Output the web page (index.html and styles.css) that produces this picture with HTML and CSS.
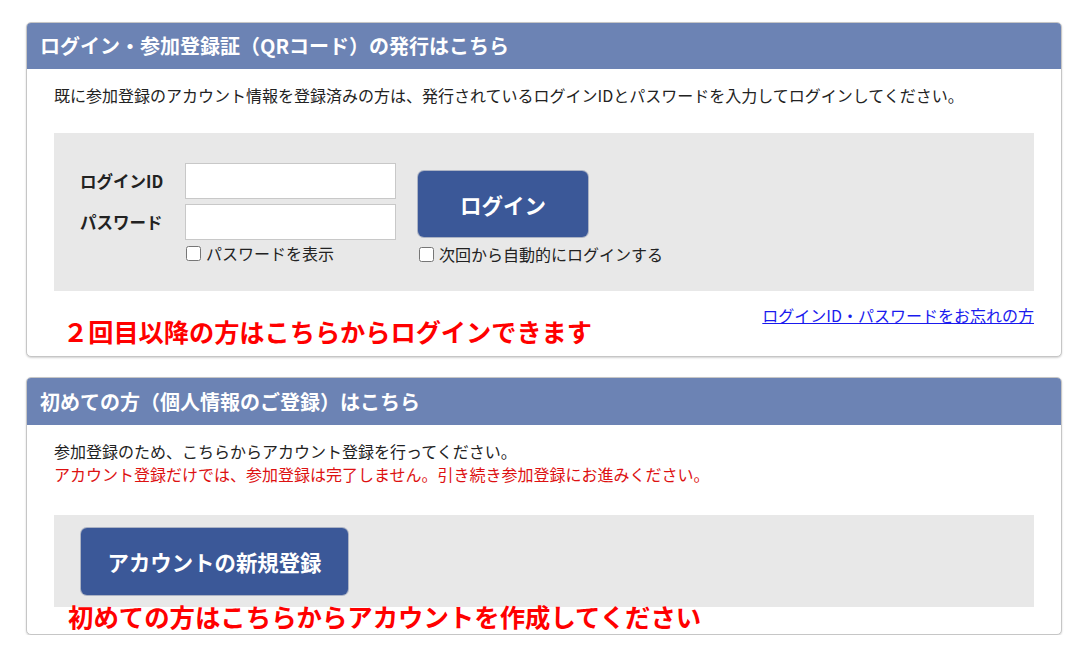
FILE: index.html
```html
<!DOCTYPE html>
<html lang="ja">
<head>
<meta charset="utf-8">
<title>ログイン</title>
<link rel="stylesheet" href="styles.css">
</head>
<body>
<div class="page">
  <section class="panel panel-login">
    <h2 class="panel-head">ログイン・参加登録証（QRコード）の発行はこちら</h2>
    <div class="panel-body">
      <p class="lead">既に参加登録のアカウント情報を登録済みの方は、発行されているログインIDとパスワードを入力してログインしてください。</p>
      <div class="graybox login-box">
        <div class="fields">
          <label class="field-label" for="lid">ログインID</label>
          <input class="text-input" id="lid" type="text">
          <label class="field-label" for="pw">パスワード</label>
          <input class="text-input" id="pw" type="password">
          <span></span>
          <label class="check"><input type="checkbox" class="cb"><span>パスワードを表示</span></label>
        </div>
        <div class="action">
          <button class="btn btn-login" type="button">ログイン</button>
          <label class="check"><input type="checkbox" class="cb"><span>次回から自動的にログインする</span></label>
        </div>
      </div>
      <div class="foot-row">
        <p class="annot annot-1">２回目以降の方はこちらからログインできます</p>
        <a class="forgot" href="#">ログインID・パスワードをお忘れの方</a>
      </div>
    </div>
  </section>

  <section class="panel panel-new">
    <h2 class="panel-head">初めての方（個人情報のご登録）はこちら</h2>
    <div class="panel-body">
      <p class="lead lead-2">参加登録のため、こちらからアカウント登録を行ってください。<br><span class="warn">アカウント登録だけでは、参加登録は完了しません。引き続き参加登録にお進みください。</span></p>
      <div class="graybox new-box">
        <button class="btn btn-new" type="button">アカウントの新規登録</button>
      </div>
      <p class="annot annot-2">初めての方はこちらからアカウントを作成してください</p>
    </div>
  </section>
</div>
</body>
</html>
```

FILE: styles.css
```css
* { box-sizing: border-box; }

html, body {
  margin: 0;
  padding: 0;
  background: #ffffff;
}

body {
  font-family: "Noto Sans CJK JP", "Noto Sans", sans-serif;
  color: #222222;
  font-size: 16px;
}

.page {
  width: 1036px;
  margin-left: 26px;
  padding-top: 22px;
}

.panel {
  border: 1px solid #c6c6c6;
  border-radius: 5px;
  box-shadow: 0 1px 2px rgba(0, 0, 0, 0.18);
  overflow: hidden;
  background: #ffffff;
}

.panel-new {
  margin-top: 20px;
}

.panel-head {
  margin: 0;
  height: 46px;
  background: #6c83b4;
  color: #ffffff;
  font-size: 20px;
  font-weight: 700;
  line-height: 46px;
  padding-left: 13px;
  letter-spacing: 0;
}

.panel-new .panel-head {
  height: 47px;
  line-height: 47px;
}

.panel-body {
  padding: 15px 27px 0 27px;
}

.lead {
  margin: 0;
  line-height: 23px;
  font-size: 16px;
}

.warn {
  color: #dd1111;
}

.graybox {
  background: #e8e8e8;
}

.login-box {
  margin-top: 26px;
  height: 158px;
  padding: 30px 0 0 26px;
  display: flex;
  align-items: flex-start;
}

.fields {
  display: grid;
  grid-template-columns: 105px 211px;
  row-gap: 5px;
  align-items: center;
}

.field-label {
  font-weight: 700;
  font-size: 16.5px;
  line-height: 20px;
}

.text-input {
  width: 211px;
  height: 36px;
  border: 1px solid #c8c8c8;
  background: #ffffff;
  margin: 0;
  padding: 0 6px;
  font: inherit;
}

.check {
  display: flex;
  align-items: center;
  gap: 5px;
  font-size: 16px;
  line-height: 20px;
  color: #222222;
}

.fields .check {
  margin-top: -2px;
}

.cb {
  width: 15px;
  height: 15px;
  margin: 0 0 0 1px;
  accent-color: #3b5998;
}

.action {
  margin-left: 22px;
  margin-top: 8px;
  display: flex;
  flex-direction: column;
  gap: 7px;
}

.btn {
  border: 0;
  border-radius: 6px;
  background: #3b5898;
  color: #ffffff;
  font-family: "Noto Sans CJK JP", "Noto Sans", sans-serif;
  font-weight: 700;
  font-size: 21.5px;
  cursor: pointer;
  box-shadow: 0 0 0 1px rgba(60, 80, 130, 0.35);
}

.btn-login {
  width: 170px;
  height: 66px;
}

.foot-row {
  display: flex;
  justify-content: space-between;
  align-items: flex-start;
  padding-bottom: 10px;
}

.annot {
  margin: 0;
  color: #ff0000;
  font-weight: 700;
  font-size: 25.2px;
  line-height: 30px;
}

.annot-1 {
  margin-top: 25px;
  margin-left: 9px;
}

.forgot {
  margin-top: 13px;
  color: #1a1aee;
  font-size: 16px;
  line-height: 23px;
  text-decoration: underline;
}

.new-box {
  margin-top: 29px;
  height: 92px;
  padding: 13px 0 0 27px;
}

.btn-new {
  width: 267px;
  height: 67px;
  font-size: 21.4px;
}

.annot-2 {
  margin-top: -6px;
  margin-left: 14px;
  padding-bottom: 3px;
  font-size: 25.4px;
}
```
